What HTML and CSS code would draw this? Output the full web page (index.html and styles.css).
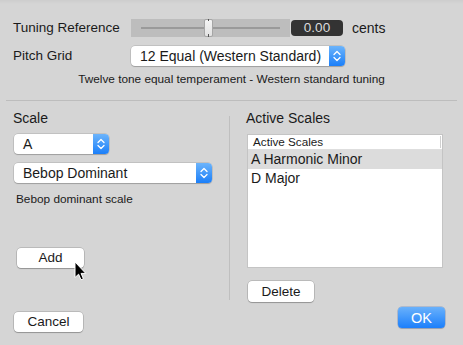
FILE: index.html
```html
<!DOCTYPE html>
<html>
<head>
<meta charset="utf-8">
<link rel="stylesheet" href="styles.css">
</head>
<body>
<div class="window">
  <div class="top">
    <div class="row row-tuning">
      <span class="label">Tuning Reference</span>
      <div class="slider">
        <div class="track"></div>
        <div class="knob"></div>
      </div>
      <div class="value">0.00</div>
      <span class="unit">cents</span>
    </div>
    <div class="row row-grid">
      <span class="label">Pitch Grid</span>
      <div class="popup popup-grid">
        <span class="popup-text">12 Equal (Western Standard)</span>
        <span class="popup-arrows">
          <svg width="16" height="20" viewBox="0 0 16 20"><path d="M5 8.5 L8 5.5 L11 8.5 M5 11.5 L8 14.5 L11 11.5" fill="none" stroke="#fff" stroke-width="1.3" stroke-linecap="round" stroke-linejoin="round"/></svg>
        </span>
      </div>
    </div>
    <p class="desc">Twelve tone equal temperament - Western standard tuning</p>
  </div>
  <div class="hsep"></div>
  <div class="bottom">
    <div class="col col-left">
      <div class="section-label">Scale</div>
      <div class="popup popup-key">
        <span class="popup-text">A</span>
        <span class="popup-arrows">
          <svg width="16" height="20" viewBox="0 0 16 20"><path d="M5 8.5 L8 5.5 L11 8.5 M5 11.5 L8 14.5 L11 11.5" fill="none" stroke="#fff" stroke-width="1.3" stroke-linecap="round" stroke-linejoin="round"/></svg>
        </span>
      </div>
      <div class="popup popup-scale">
        <span class="popup-text">Bebop Dominant</span>
        <span class="popup-arrows">
          <svg width="16" height="20" viewBox="0 0 16 20"><path d="M5 8.5 L8 5.5 L11 8.5 M5 11.5 L8 14.5 L11 11.5" fill="none" stroke="#fff" stroke-width="1.3" stroke-linecap="round" stroke-linejoin="round"/></svg>
        </span>
      </div>
      <p class="scale-desc">Bebop dominant scale</p>
      <button class="btn btn-add">Add</button>
      <button class="btn btn-cancel">Cancel</button>
    </div>
    <div class="vsep"></div>
    <div class="col col-right">
      <div class="section-label">Active Scales</div>
      <div class="table">
        <div class="table-head">Active Scales<span class="head-grip"></span></div>
        <div class="table-row selected">A Harmonic Minor</div>
        <div class="table-row">D Major</div>
      </div>
      <button class="btn btn-delete">Delete</button>
      <div class="ok-row"><button class="btn btn-ok">OK</button></div>
    </div>
  </div>
  <svg class="cursor" width="14" height="21" viewBox="0 0 14 21"><path d="M1 1 L1 16.5 L4.6 13.2 L7 18.8 L9.4 17.8 L7.1 12.4 L11.8 12.4 Z" fill="#000" stroke="#fff" stroke-width="1" stroke-linejoin="round"/></svg>
</div>
</body>
</html>
```
FILE: styles.css
```css
* { box-sizing: border-box; }
html, body { margin: 0; padding: 0; }
body {
  width: 463px;
  height: 345px;
  overflow: hidden;
  background: #d5d5d5;
  font-family: "Liberation Sans", Arial, sans-serif;
  color: #1a1a1a;
}
.window {
  position: relative;
  width: 463px;
  height: 345px;
  background: linear-gradient(#cdcdcd 0, #d5d5d5 4px);
}
.top { padding-top: 19px; }
.row {
  display: flex;
  align-items: center;
  padding-left: 13px;
}
.row-tuning { height: 18px; }
.row-grid { height: 21px; margin-top: 8px; }
.label {
  width: 118px;
  font-size: 13.5px;
  line-height: 16px;
}
.slider {
  position: relative;
  width: 159px;
  height: 18px;
  background: #bdbdbd;
}
.track {
  position: absolute;
  left: 10px;
  right: 10px;
  top: 8px;
  height: 2px;
  background: #9a9a9a;
}
.knob {
  position: absolute;
  left: 73px;
  top: 0;
  width: 9px;
  height: 18px;
  background: linear-gradient(#f4f4f4, #e2e2e2);
  border: 1px solid #a6a6a6;
  border-radius: 2px;
}
.knob::after {
  content: "";
  position: absolute;
  left: 3px;
  top: -1px;
  width: 1px;
  height: 18px;
  background: linear-gradient(#555 0, #555 2px, transparent 2px, transparent 15px, #555 15px);
}
.value {
  margin-left: 1px;
  width: 52px;
  height: 16px;
  border-radius: 4px;
  background: #333333;
  color: #dcdcdc;
  font-size: 13.5px;
  line-height: 16px;
  text-align: center;
}
.unit {
  margin-left: 9px;
  font-size: 14px;
}
.popup {
  display: flex;
  align-items: stretch;
  height: 20px;
  background: #fff;
  border-radius: 4px;
  box-shadow: 0 0 0 0.5px rgba(0,0,0,0.18), 0 1px 1px rgba(0,0,0,0.18);
}
.popup-text {
  flex: 1;
  font-size: 14px;
  line-height: 20px;
  padding-left: 9px;
  white-space: nowrap;
}
.popup-arrows {
  width: 16px;
  border-radius: 0 4px 4px 0;
  background: linear-gradient(#6cb4fb, #1b7ff9);
  display: flex;
  align-items: center;
  justify-content: center;
}
.popup-grid { width: 214px; height: 20px; }
.desc {
  margin: 7px 0 0;
  text-align: center;
  font-size: 11.8px;
  line-height: 13px;
}
.hsep {
  margin: 14px 6px 0;
  height: 1px;
  background: #bdbdbd;
}
.bottom {
  display: flex;
  height: 244px;
}
.col-left {
  width: 229px;
  padding: 9px 0 0 13px;
  display: flex;
  flex-direction: column;
  align-items: flex-start;
}
.vsep {
  width: 1px;
  height: 184px;
  margin-top: 15px;
  background: #bfbfbf;
}
.col-right {
  flex: 1;
  padding: 9px 18px 0 16px;
  display: flex;
  flex-direction: column;
  align-items: flex-start;
}
.section-label {
  font-size: 14px;
  line-height: 16px;
}
.popup-key { width: 95px; margin: 8px 0 0 1px; }
.popup-scale { width: 198px; margin: 9px 0 0 1px; }
.scale-desc {
  margin: 10px 0 0 3px;
  font-size: 11.8px;
  line-height: 13px;
}
.btn {
  font-family: "Liberation Sans", Arial, sans-serif;
  font-size: 13.5px;
  color: #1a1a1a;
  background: #fff;
  border: none;
  border-radius: 4px;
  box-shadow: 0 0 0 0.5px rgba(0,0,0,0.25), 0 1px 1px rgba(0,0,0,0.2);
  padding: 0;
  height: 20px;
  line-height: 20px;
  text-align: center;
}
.btn-add { width: 67px; margin: 42px 0 0 4px; }
.btn-cancel { width: 69px; margin: 44px 0 0 1px; }
.table {
  margin: 8px 0 0 1px;
  width: 196px;
  height: 134px;
  background: #fff;
  border: 1px solid #c4c4c4;
}
.table-head {
  position: relative;
  height: 15px;
  font-size: 11.7px;
  line-height: 14px;
  padding-left: 5px;
  border-bottom: 1px solid #dedede;
}
.head-grip {
  position: absolute;
  right: 1px;
  top: 1px;
  width: 1px;
  height: 12px;
  background: #d0d0d0;
}
.table-row {
  height: 19px;
  font-size: 14px;
  line-height: 19px;
  padding-left: 3px;
}
.table-row.selected { background: #dcdcdc; }
.btn-delete { width: 66px; height: 21px; margin: 13px 0 0 2px; }
.ok-row {
  align-self: stretch;
  display: flex;
  justify-content: flex-end;
  margin-top: 5px;
}
.btn-ok {
  width: 47px;
  height: 21px;
  color: #fff;
  font-size: 14.5px;
  background: linear-gradient(#69b1fb, #1c7ffb);
  box-shadow: 0 0 0 0.5px rgba(0,60,160,0.35), 0 1px 1px rgba(0,0,0,0.15);
}
.cursor {
  position: absolute;
  left: 74px;
  top: 261px;
}
```
